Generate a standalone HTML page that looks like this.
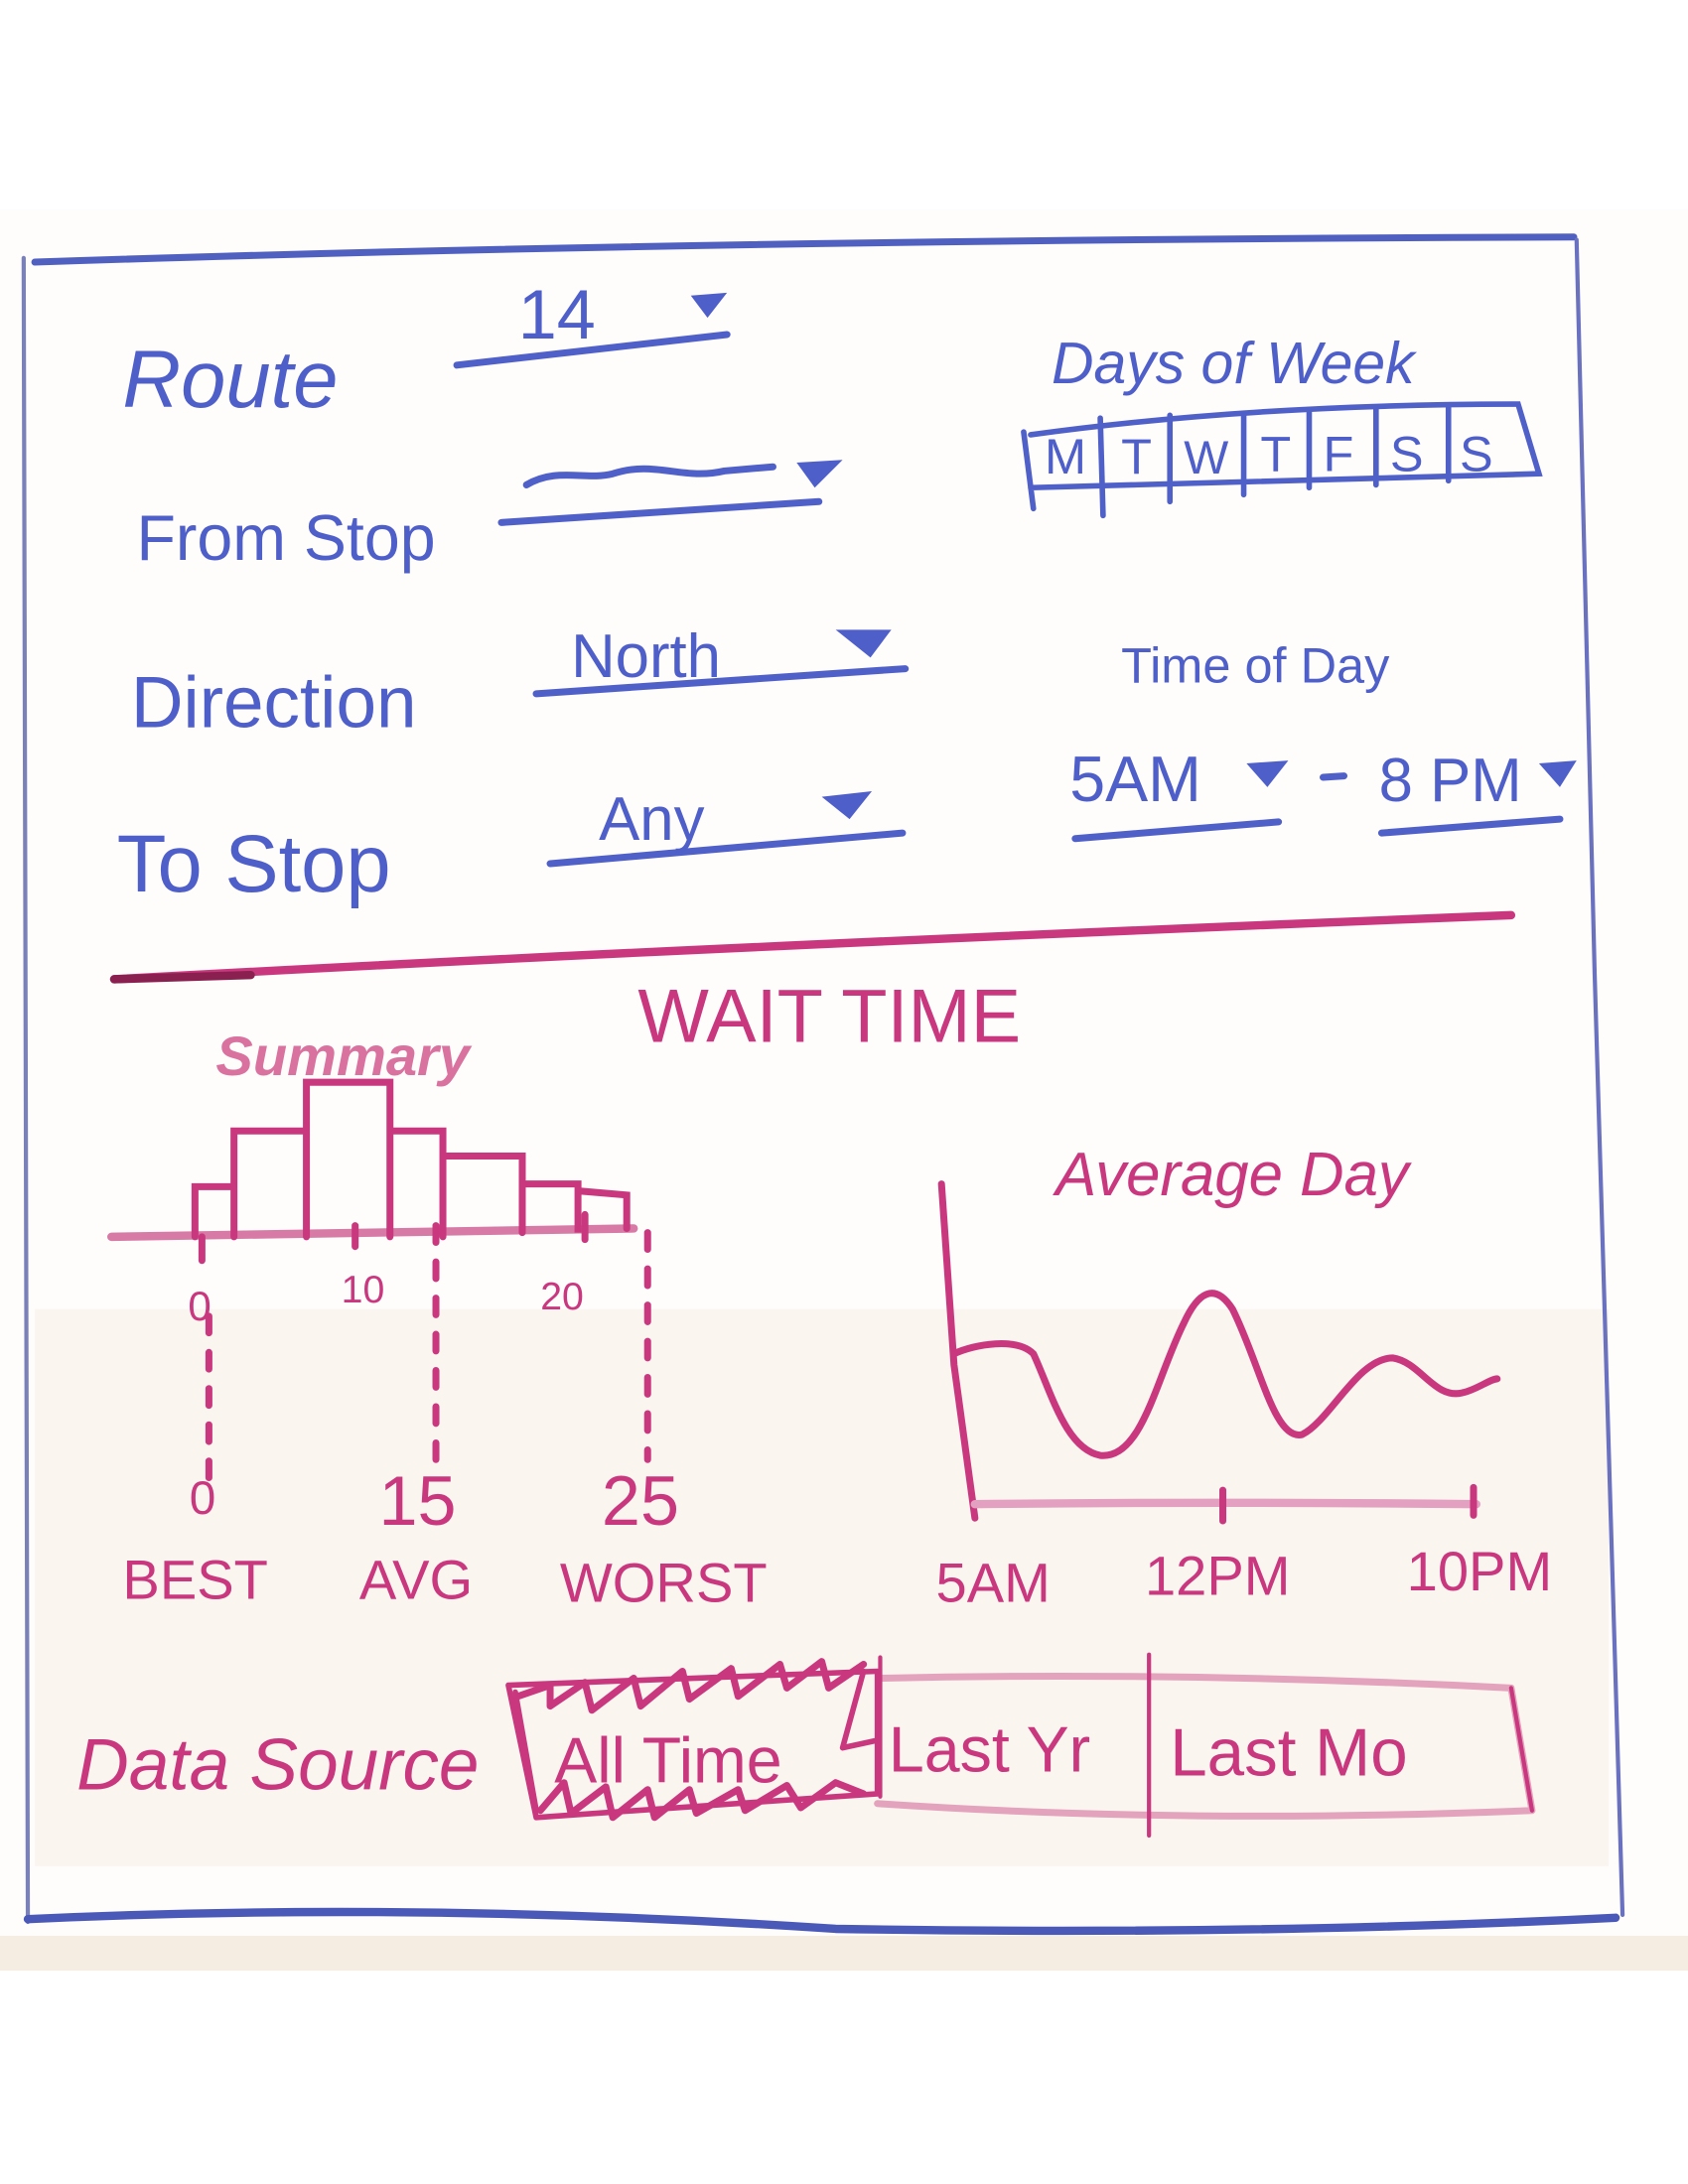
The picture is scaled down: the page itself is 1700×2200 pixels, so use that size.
<!DOCTYPE html>
<html><head><meta charset="utf-8"><style>
html,body{margin:0;padding:0;background:#fff;}
svg{display:block}
text{font-family:"Liberation Sans",sans-serif;}
.b{fill:#4f5fc9}
.p{fill:#c9387f}
.lp{fill:#d9729f}
</style></head><body>
<svg width="1700" height="2200" viewBox="0 0 1212 1568" xmlns="http://www.w3.org/2000/svg">
<rect x="0" y="0" width="1212" height="1568" fill="#fff"/>
<rect x="0" y="150" width="1212" height="1265" fill="#fefdfc"/>
<rect x="25" y="940" width="1130" height="400" fill="#f8efe6" opacity="0.55"/>
<rect x="0" y="1390" width="1212" height="25" fill="#f1e6d6" opacity="0.7"/>
<!-- frame -->
<g fill="none" stroke-linecap="round">
<path d="M25 188 Q500 172 1130 170" stroke="#5060c0" stroke-width="5"/>
<path d="M17 185 L20 1380" stroke="#7a80b8" stroke-width="3"/>
<path d="M1132 172 L1145 700 L1165 1375" stroke="#6a72c0" stroke-width="3"/>
<path d="M20 1378 Q300 1365 600 1385 Q900 1390 1160 1377" stroke="#4a58b8" stroke-width="6"/>
</g>
<!-- blue controls -->
<g fill="none" stroke="#5060c9" stroke-width="5" stroke-linecap="round">
<path d="M328 262 L522 240"/>
<path d="M378 348 C400 335 420 345 440 340 C470 330 490 345 520 338 L555 335"/>
<path d="M360 375 L588 360"/>
<path d="M385 498 L650 480"/>
<path d="M395 620 L648 598"/>
<path d="M772 602 L918 590"/>
<path d="M992 598 L1120 588"/>
<path d="M950 558 L965 557"/>
<path d="M735 310 L742 365 M740 312 Q900 290 1090 290 L1105 340 Q900 345 740 350" stroke-width="4"/>
<path d="M790 300 L792 370 M840 298 L840 360 M893 298 L893 355 M940 296 L940 350 M988 292 L988 348 M1040 292 L1040 345" stroke-width="4"/>
</g>
<g class="b">
<path d="M496 212 L522 210 L508 228 Z"/>
<path d="M572 332 L605 330 L585 350 Z"/>
<path d="M600 452 L640 452 L625 472 Z"/>
<path d="M590 572 L626 568 L610 588 Z"/>
<path d="M895 548 L925 546 L910 565 Z"/>
<path d="M1105 548 L1132 546 L1120 565 Z"/>
</g>
<text x="88" y="292" class="b" font-size="58" font-style="italic">Route</text>
<text x="372" y="243" class="b" font-size="50">14</text>
<text x="98" y="402" class="b" font-size="46">From Stop</text>
<text x="94" y="522" class="b" font-size="52">Direction</text>
<text x="410" y="486" class="b" font-size="44">North</text>
<text x="84" y="640" class="b" font-size="58">To Stop</text>
<text x="430" y="603" class="b" font-size="44">Any</text>
<text x="755" y="275" class="b" font-size="42" font-style="italic">Days of Week</text>
<text x="750" y="340" class="b" font-size="36">M</text>
<text x="805" y="340" class="b" font-size="36">T</text>
<text x="850" y="340" class="b" font-size="34">W</text>
<text x="905" y="338" class="b" font-size="36">T</text>
<text x="950" y="338" class="b" font-size="36">F</text>
<text x="998" y="338" class="b" font-size="36">S</text>
<text x="1048" y="338" class="b" font-size="36">S</text>
<text x="805" y="490" class="b" font-size="36">Time of Day</text>
<text x="768" y="575" class="b" font-size="46">5AM</text>
<text x="990" y="575" class="b" font-size="44">8 PM</text>
<!-- pink divider -->
<path d="M82 703 Q500 680 1085 657" fill="none" stroke="#c9387f" stroke-width="6" stroke-linecap="round"/>
<path d="M82 703 L180 700" stroke="#8a2050" stroke-width="6" stroke-linecap="round"/>
<text x="458" y="748" class="p" font-size="54">WAIT TIME</text>
<text x="155" y="772" class="lp" font-size="40" font-style="italic" font-weight="bold">Summary</text>
<!-- histogram -->
<g fill="none" stroke-linecap="round">
<path d="M80 888 L455 882" stroke="#d77aa5" stroke-width="6"/>
<path d="M140 888 L140 852 L168 852 L168 888 M168 888 L168 812 L220 812 L220 888 M220 888 L220 777 L280 777 L280 888 M280 888 L280 812 L318 812 L318 888 M318 888 L318 830 L375 830 L375 885 M375 885 L375 850 L415 850 L415 885 L415 855 L450 858 L450 882" stroke="#c9387f" stroke-width="5"/>
<path d="M145 888 L145 905 M255 880 L255 895 M420 872 L420 890" stroke="#c9387f" stroke-width="5"/>
<path d="M150 945 L150 1062 M313 880 L313 1048 M465 885 L465 1048" stroke="#c9387f" stroke-width="5" stroke-dasharray="12 14"/>
</g>
<text x="135" y="948" class="p" font-size="30">0</text>
<text x="245" y="935" class="p" font-size="28">10</text>
<text x="388" y="940" class="p" font-size="28">20</text>
<text x="136" y="1087" class="p" font-size="34">0</text>
<text x="272" y="1095" class="p" font-size="50">15</text>
<text x="432" y="1095" class="p" font-size="50">25</text>
<text x="88" y="1148" class="p" font-size="40">BEST</text>
<text x="258" y="1148" class="p" font-size="40">AVG</text>
<text x="402" y="1150" class="p" font-size="40">WORST</text>
<!-- line chart -->
<text x="758" y="858" class="p" font-size="44" font-style="italic">Average Day</text>
<g fill="none" stroke-linecap="round" stroke-linejoin="round">
<path d="M676 850 L685 980 L700 1090" stroke="#c9387f" stroke-width="5"/>
<path d="M700 1080 Q880 1078 1060 1080" stroke="#e3a0c0" stroke-width="6"/>
<path d="M878 1070 L878 1092 M1058 1068 L1058 1088" stroke="#c9387f" stroke-width="5"/>
<path d="M685 972 C700 965 730 960 742 972 C755 1000 765 1040 790 1045 C820 1048 830 990 850 950 C860 928 872 920 885 940 C905 980 915 1035 935 1030 C955 1020 975 975 1000 975 C1020 978 1030 1005 1050 1000 C1060 998 1070 990 1075 990" stroke="#c9387f" stroke-width="5"/>
</g>
<text x="672" y="1150" class="p" font-size="40">5AM</text>
<text x="822" y="1145" class="p" font-size="40">12PM</text>
<text x="1010" y="1142" class="p" font-size="40">10PM</text>
<!-- data source -->
<text x="55" y="1285" class="p" font-size="52" font-style="italic">Data Source</text>
<g fill="none" stroke-linecap="round" stroke-linejoin="round">
<path d="M632 1205 Q850 1200 1085 1212 L1100 1300 Q850 1310 630 1295" stroke="#e4a3bd" stroke-width="5"/>
<path d="M1085 1212 L1100 1300" stroke="#c9387f" stroke-width="3"/>
<path d="M632 1190 L632 1290 M825 1188 L825 1318" stroke="#c9387f" stroke-width="3"/>
<path d="M365 1210 L630 1200 L630 1288 L385 1305 Z" stroke="#c9387f" stroke-width="4"/>
<path d="M372 1218 L395 1210 L395 1225 L420 1208 L425 1228 L455 1205 L460 1225 L490 1200 L495 1220 L525 1198 L530 1218 L560 1195 L565 1212 L590 1193 L595 1212 L620 1195" stroke="#c9387f" stroke-width="5"/>
<path d="M388 1300 L405 1280 L410 1302 L435 1283 L440 1305 L465 1285 L470 1305 L495 1285 L500 1302 L530 1285 L535 1300 L565 1282 L575 1298 L600 1280 L620 1288" stroke="#c9387f" stroke-width="5"/>
<path d="M370 1215 L385 1300 M620 1200 L605 1255 L628 1250" stroke="#c9387f" stroke-width="4"/>
</g>
<text x="398" y="1280" class="p" font-size="46">All Time</text>
<text x="638" y="1272" class="p" font-size="46">Last Yr</text>
<text x="840" y="1275" class="p" font-size="48">Last Mo</text>
</svg>
</body></html>
